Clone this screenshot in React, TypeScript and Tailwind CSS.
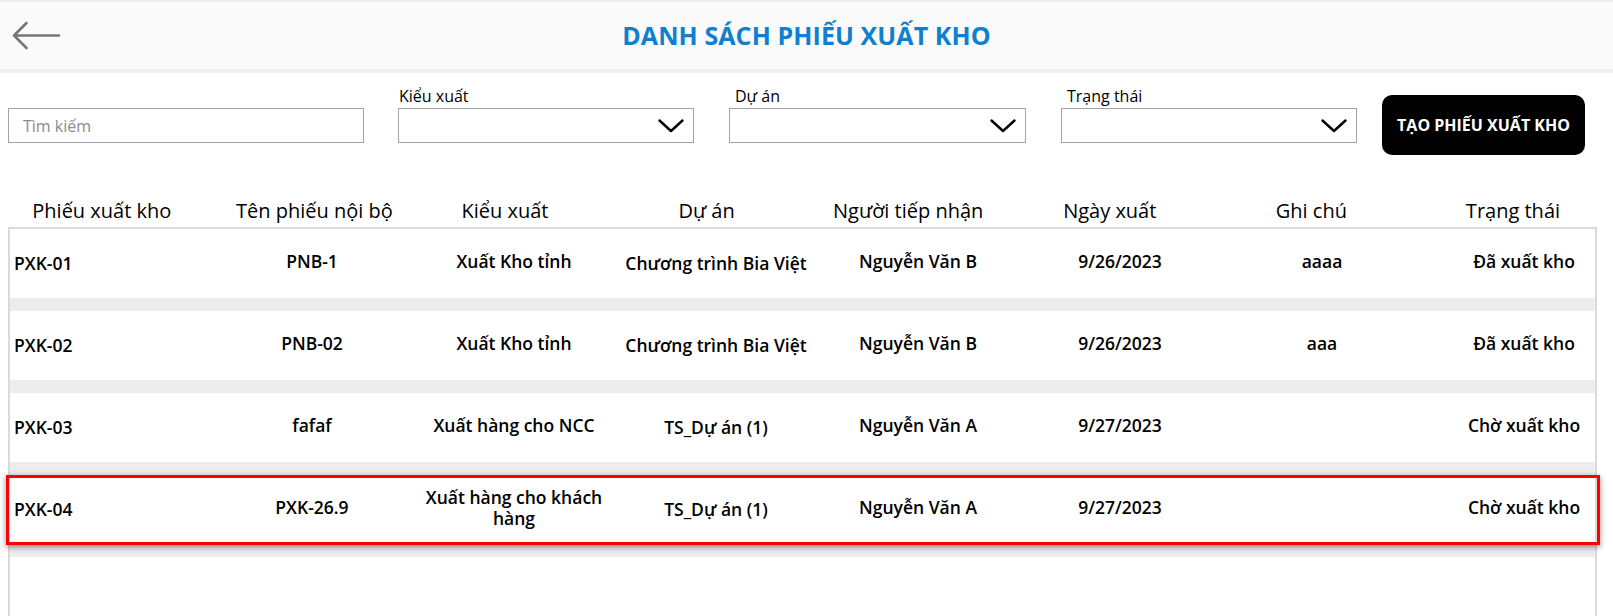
import React from 'react';

type Row = {
    code: string;
    internal: string;
    kind: string;
    project: string;
    receiver: string;
    date: string;
    note: string;
    status: string;
    selected?: boolean;
};

const rows: Row[] = [
    { code: 'PXK-01', internal: 'PNB-1', kind: 'Xuất Kho tỉnh', project: 'Chương trình Bia Việt', receiver: 'Nguyễn Văn B', date: '9/26/2023', note: 'aaaa', status: 'Đã xuất kho' },
    { code: 'PXK-02', internal: 'PNB-02', kind: 'Xuất Kho tỉnh', project: 'Chương trình Bia Việt', receiver: 'Nguyễn Văn B', date: '9/26/2023', note: 'aaa', status: 'Đã xuất kho' },
    { code: 'PXK-03', internal: 'fafaf', kind: 'Xuất hàng cho NCC', project: 'TS_Dự án (1)', receiver: 'Nguyễn Văn A', date: '9/27/2023', note: '', status: 'Chờ xuất kho' },
    { code: 'PXK-04', internal: 'PXK-26.9', kind: 'Xuất hàng cho khách hàng', project: 'TS_Dự án (1)', receiver: 'Nguyễn Văn A', date: '9/27/2023', note: '', status: 'Chờ xuất kho', selected: true },
];

const headers = ['Phiếu xuất kho', 'Tên phiếu nội bộ', 'Kiểu xuất', 'Dự án', 'Người tiếp nhận', 'Ngày xuất', 'Ghi chú', 'Trạng thái'];

function Chevron() {
    return (
        <svg width="26" height="14" viewBox="0 0 26 14" fill="none" className="shrink-0">
            <path d="M1.5 1.5 L13 12 L24.5 1.5" stroke="#000" strokeWidth="2.4" strokeLinecap="round" strokeLinejoin="round" />
        </svg>
    );
}

function Dropdown({ label, width, labelPad, gap }: { label: string; width: string; labelPad: string; gap: string }) {
    return (
        <div className={`flex flex-col ${width} ${gap}`}>
            <div className={`h-[23px] text-[16px] leading-[22px] text-black ${labelPad}`}>{label}</div>
            <div className="flex h-[35px] items-center justify-end border border-[#a3a3a3] bg-white pr-[9px]">
                <Chevron />
            </div>
        </div>
    );
}

export default function App() {
    return (
        <div className="h-[616px] w-full overflow-hidden bg-white font-['Open_Sans',sans-serif] text-black">
            {/* Title bar */}
            <header className="relative flex h-[73px] items-center justify-center border-t-2 border-b-4 border-[#efefef] bg-[#fafafa]">
                <svg width="50" height="30" viewBox="0 0 50 30" fill="none" className="absolute left-[11px] top-[19px]">
                    <path d="M48 14.5 H3 M15.5 2 L3 14.5 L15.5 27" stroke="#777" strokeWidth="2.6" strokeLinecap="round" strokeLinejoin="round" />
                </svg>
                <h1 className="text-[25px] font-bold tracking-[0.1px] text-[#0f7fd0]">DANH SÁCH PHIẾU XUẤT KHO</h1>
            </header>

            {/* Filters */}
            <div className="mt-[12px] flex items-start pl-[8px]">
                <div className="flex w-[356px] flex-col">
                    <div className="h-[23px]" />
                    <div className="flex h-[35px] items-center border border-[#a3a3a3] bg-white pl-[14px] text-[16px] text-[#8a8a8a]">
                        Tìm kiếm
                    </div>
                </div>
                <Dropdown label="Kiểu xuất" width="w-[296px]" labelPad="pl-[1px]" gap="ml-[34px]" />
                <Dropdown label="Dự án" width="w-[297px]" labelPad="pl-[6px]" gap="ml-[35px]" />
                <Dropdown label="Trạng thái" width="w-[296px]" labelPad="pl-[6px]" gap="ml-[35px]" />
                <button className="ml-[25px] mt-[10px] flex h-[60px] w-[203px] items-center justify-center rounded-[10px] bg-black text-[16px] font-bold text-white">
                    TẠO PHIẾU XUẤT KHO
                </button>
            </div>

            {/* Column headings */}
            <div className="mt-[42px] grid h-[28px] grid-cols-[repeat(8,201.6px)] pl-[1px] text-[20px] leading-[28px]">
                {headers.map((h, i) => (
                    <div key={h} className={`flex justify-center whitespace-nowrap ${i === 1 ? 'pl-[22px]' : ''}`}>
                        {h}
                    </div>
                ))}
            </div>

            {/* Gallery */}
            <div className="ml-[8px] mt-[2px] h-[400px] w-[1589px] border-2 border-b-0 border-[#dadada]">
                {rows.map((r) => (
                    <div key={r.code}>
                        <div className="relative grid h-[69px] grid-cols-[201px_repeat(6,202px)_1fr] items-center bg-white pb-[4px] text-[17.5px] font-[560] leading-[21px]">
                            <div className="pl-[4px] pt-[3px]">{r.code}</div>
                            <div className="px-2 text-center">{r.internal}</div>
                            <div className="px-2 text-center">{r.kind}</div>
                            <div className="px-2 pt-[3px] text-center">{r.project}</div>
                            <div className="px-2 text-center">{r.receiver}</div>
                            <div className="px-2 text-center">{r.date}</div>
                            <div className="px-2 text-center">{r.note}</div>
                            <div className="pl-[30px] text-center">{r.status}</div>
                            {r.selected && (
                                <div className="pointer-events-none absolute -left-[4px] -right-[5px] top-0 -bottom-[1px] border-[3px] border-[#ff0000] shadow-[0_2px_6px_rgba(0,0,0,0.45)]" />
                            )}
                        </div>
                        <div className="h-[13px] bg-[#ededed]" />
                    </div>
                ))}
            </div>
        </div>
    );
}
